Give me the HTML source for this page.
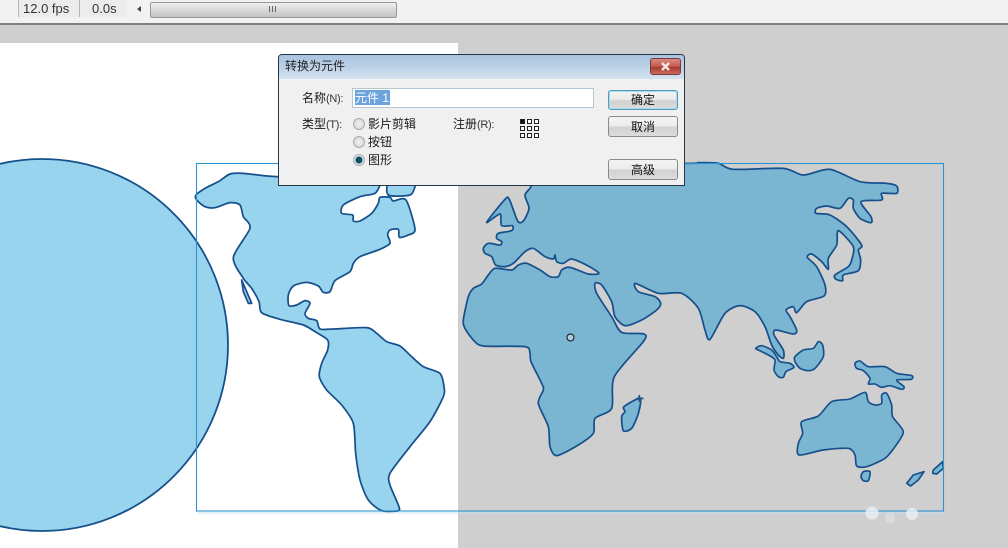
<!DOCTYPE html>
<html lang="zh">
<head>
<meta charset="utf-8">
<title>转换为元件</title>
<style>
html,body{margin:0;padding:0;width:1008px;height:548px;overflow:hidden;background:#cfcfcf;font-family:"Liberation Sans","Noto Sans CJK SC",sans-serif;color:#111}
.abs{position:absolute}
.t{position:absolute;font-size:12px;line-height:14px;white-space:nowrap;color:#1a1a1a}
.t i{font-style:normal;font-size:11px;letter-spacing:-.3px;color:#333}
.btn{position:absolute;left:608px;width:68px;border:1px solid #8a8a8a;border-radius:3px;background:linear-gradient(#f4f4f4 0%,#ececec 45%,#d2d2d2 55%,#dcdcdc 100%);text-align:center;font-size:12px;color:#111;box-sizing:content-box}
.radio{position:absolute;left:353px;width:10px;height:10px;border:1px solid #aaa;border-radius:50%;background:radial-gradient(circle at 50% 50%,#f0f0f0,#d4d4d4)}
.g{position:absolute;width:5px;height:5px;border:1px solid #222;box-sizing:border-box;background:#fff}
</style>
</head>
<body>
<!-- toolbar -->
<div class="abs" style="left:0;top:0;width:1008px;height:23px;background:#f2f2f2"></div>
<div class="abs" style="left:0;top:23px;width:1008px;height:2px;background:#808080"></div>
<div class="abs" style="left:19px;top:0;width:108px;height:17px;background:#ececec"></div>
<div class="abs" style="left:18px;top:0;width:1px;height:17px;background:#b5b5b5"></div>
<div class="abs" style="left:79px;top:0;width:1px;height:17px;background:#b5b5b5"></div>
<div class="t" style="left:23px;top:2px;font-size:13px;color:#333">12.0 fps</div>
<div class="t" style="left:92px;top:2px;font-size:13px;color:#333">0.0s</div>
<div class="abs" style="left:137px;top:6px;width:0;height:0;border:3px solid transparent;border-right:4px solid #444;border-left:0"></div>
<div class="abs" style="left:150px;top:2px;width:245px;height:14px;border:1px solid #999;border-radius:2px;background:linear-gradient(#f0f0f0,#d8d8d8 50%,#c4c4c4)"></div>
<div class="abs" style="left:269px;top:6px;width:7px;height:6px;background:repeating-linear-gradient(90deg,#666 0 1px,transparent 1px 3px)"></div>

<!-- stage -->
<div class="abs" style="left:0;top:43px;width:458px;height:505px;background:#fff"></div>

<svg class="abs" style="left:0;top:0" width="1008" height="548" viewBox="0 0 1008 548">
  <!-- circle -->
  <circle cx="42" cy="345" r="186" fill="#98d4ed" stroke="#16508c" stroke-width="1.8"/>
  <!-- Americas -->
  <g transform="translate(190,160) scale(0.33333)" fill="#98d4ed" stroke="#16508c" stroke-width="5.2" stroke-linejoin="round">
    <path class="s" d="M18,105 L45,85 85,65 120,42 160,40 265,50 400,40 570,60 570,75 555,100 510,110 460,135 455,160 488,165 490,183 510,183 545,160 565,130 570,112 600,112 610,123 648,120 675,208 655,225 628,232 625,208 600,210 593,225 600,250 570,268 510,290 490,310 480,335 435,362 420,395 400,397 385,378 350,367 310,378 295,405 297,437 320,435 345,422 360,430 345,460 355,475 380,482 390,507 430,507 530,503 560,520 590,545 630,558 665,590 700,620 750,640 762,680 760,710 720,785 660,860 600,940 600,975 625,1035 625,1052 575,1052 535,1020 510,960 497,880 490,790 455,735 410,690 388,650 395,610 413,570 413,540 380,518 340,495 270,478 215,458 207,425 185,385 160,355 130,292 180,205 160,170 150,135 120,128 75,143 45,140 20,120Z"/>
    <path class="s" d="M600,60 L595,105 660,105 675,80 680,60Z"/>
    <path d="M155,360 L185,430 175,430 160,395Z"/>
  </g>
  <!-- Eurasia / Africa -->
  <g transform="translate(455,160) scale(0.33333)" fill="#7ab6d2" stroke="#16508c" stroke-width="5.2" stroke-linejoin="round">
    <path class="s" d="M230,75 L210,105 222,145 205,183 188,183 163,118 150,118 95,187 135,162 140,197 172,197 170,212 130,220 125,235 140,245 135,255 100,250 85,265 90,280 110,290 122,315 150,320 175,310 210,275 235,265 270,290 295,297 300,285 305,305 325,310 350,297 400,318 432,340 400,342 345,322 320,330 310,350 285,350 255,330 215,310 190,315 170,330 120,325 100,345 80,372 55,385 40,410 25,480 30,505 55,540 85,558 210,560 225,580 228,605 260,670 265,690 250,730 280,800 285,860 305,887 370,855 415,820 420,775 470,745 478,650 565,545 567,522 500,517 470,470 425,400 420,370 440,375 470,425 480,470 510,497 560,480 605,450 617,430 600,410 550,395 541,370 610,400 680,400 730,445 750,510 765,538 810,460 855,437 900,455 930,500 950,555 970,585 985,595 985,570 957,525 963,510 1015,522 1025,510 1005,470 993,450 1015,440 1025,458 1055,425 1107,408 1110,375 1085,320 1057,292 1070,282 1100,305 1120,328 1120,295 1145,255 1150,212 1195,260 1190,300 1180,320 1140,345 1143,358 1163,362 1165,345 1210,332 1217,300 1210,270 1220,255 1175,200 1125,165 1083,160 1085,145 1115,138 1155,145 1180,115 1195,120 1195,145 1215,175 1248,188 1248,170 1218,125 1280,120 1280,100 1325,100 1325,78 1295,70 1215,65 1125,28 1045,45 985,25 835,28 790,10 730,8 690,10 230,10Z"/>
    <path class="s" d="M507,740 L555,715 550,760 530,805 505,812 500,770 510,755Z"/>
    <path d="M553,705 L553,725 M545,715 L565,715" fill="none"/>
  </g>
  <!-- islands -->
  <g transform="translate(700,160) scale(0.33333)" fill="#7ab6d2" stroke="#16508c" stroke-width="5" stroke-linejoin="round">
    <path class="s" d="M167,565 L185,557 215,570 230,590 240,605 270,610 282,622 258,635 250,652 235,650 222,630 225,600 205,585 175,570Z"/>
    <path class="s" d="M285,590 L310,570 340,565 355,545 368,555 370,590 345,625 325,632 300,625 285,605Z"/>
    <path class="s" d="M465,610 L480,603 505,620 555,620 590,640 635,647 633,658 590,660 612,680 605,688 570,677 545,682 525,672 505,672 510,655 490,632 470,625Z"/>
    <path class="s" d="M305,785 L355,768 395,725 450,717 495,697 505,725 525,735 545,730 545,705 560,700 575,735 578,770 610,815 585,860 555,895 500,920 470,918 465,885 445,865 370,870 297,885 295,850 308,820Z"/>
    <path class="s" d="M490,935 L510,935 505,962 490,962 483,950Z"/>
    <path d="M620,970 L640,945 672,935 655,960 632,978Z"/>
    <path d="M700,930 L728,905 730,925 710,942 698,940Z"/>
  </g>
  <!-- bbox -->
  <rect x="196.5" y="163.5" width="747" height="347.5" fill="none" stroke="#2f93cf" stroke-width="1.1"/>
  <!-- registration point -->
  <circle cx="570.5" cy="337.5" r="3.5" fill="#a9cfdc" stroke="#111" stroke-width="1"/>
  <!-- watermark traces -->
  <rect x="197" y="512" width="746" height="2" fill="#c6e0ee" opacity=".45"/>
  <circle cx="872" cy="513" r="6.5" fill="#e6eef2" opacity=".85"/>
  <circle cx="912" cy="514" r="6" fill="#e6eef2" opacity=".85"/>
  <circle cx="890" cy="518" r="5" fill="#e0e6e8" opacity=".6"/>
</svg>
<script>
document.querySelectorAll('path.s').forEach(function(p){
  var n=p.getAttribute('d').match(/-?\d+(\.\d+)?/g).map(Number),a=[];
  for(var i=0;i<n.length;i+=2)a.push([n[i],n[i+1]]);
  var L=a.length,d='M'+a[0][0]+','+a[0][1],k=0.13;
  for(var i=0;i<L;i++){
    var p0=a[(i-1+L)%L],p1=a[i],p2=a[(i+1)%L],p3=a[(i+2)%L];
    d+=' C'+(p1[0]+(p2[0]-p0[0])*k)+','+(p1[1]+(p2[1]-p0[1])*k)+' '+(p2[0]-(p3[0]-p1[0])*k)+','+(p2[1]-(p3[1]-p1[1])*k)+' '+p2[0]+','+p2[1];
  }
  p.setAttribute('d',d+'Z');
});
</script>

<!-- dialog -->
<div class="abs" style="left:278px;top:54px;width:405px;height:130px;border:1px solid #25364a;border-radius:4px 4px 0 0;background:#f0f0f0;overflow:hidden">
  <div class="abs" style="left:0;top:0;width:405px;height:24px;background:linear-gradient(#a9c3df 0%,#b9cfe6 45%,#d6e3ef 100%)"></div>
  <div class="abs" style="left:0;top:24px;width:405px;height:106px;background:#f0f0f0"></div>
</div>
<div class="abs" style="left:650px;top:58px;width:31px;height:17px;border:1px solid #7a3a3a;border-radius:3px;background:linear-gradient(#d88a80,#c25a50 50%,#a83a30 55%,#c86a5e);box-sizing:border-box"></div>
<svg class="abs" style="left:650px;top:58px" width="31" height="17"><path d="M12,5 L19,12 M19,5 L12,12" stroke="#f4e8e6" stroke-width="2.4" fill="none"/></svg>
<div class="t" style="left:285px;top:59px;color:#222">转换为元件</div>

<div class="t" style="left:302px;top:91px">名称<i>(N):</i></div>
<div class="abs" style="left:352px;top:88px;width:240px;height:18px;background:#fff;border:1px solid #b4c8d4"></div>
<div class="abs" style="left:355px;top:90px;width:35px;height:15px;background:#6ca3dc"></div>
<div class="t" style="left:355px;top:91px;color:#fff">元件 1</div>

<div class="t" style="left:302px;top:117px">类型<i>(T):</i></div>
<div class="radio" style="top:118px"></div>
<div class="t" style="left:368px;top:117px">影片剪辑</div>
<div class="radio" style="top:136px"></div>
<div class="t" style="left:368px;top:135px">按钮</div>
<div class="radio" style="top:154px;background:radial-gradient(circle at 50% 50%,#0f4f6a 0 3px,#dfe8ee 4px)"></div>
<div class="t" style="left:368px;top:153px">图形</div>
<div class="t" style="left:453px;top:117px">注册<i>(R):</i></div>

<div class="g" style="left:520px;top:119px;background:#111"></div>
<div class="g" style="left:527px;top:119px"></div>
<div class="g" style="left:534px;top:119px"></div>
<div class="g" style="left:520px;top:126px"></div>
<div class="g" style="left:527px;top:126px"></div>
<div class="g" style="left:534px;top:126px"></div>
<div class="g" style="left:520px;top:133px"></div>
<div class="g" style="left:527px;top:133px"></div>
<div class="g" style="left:534px;top:133px"></div>

<div class="btn" style="top:90px;height:18px;line-height:19px;border:1px solid #4f9cb8;box-shadow:inset 0 0 0 1px #a8dcec">确定</div>
<div class="btn" style="top:116px;height:19px;line-height:20px">取消</div>
<div class="btn" style="top:159px;height:19px;line-height:20px">高级</div>
</body>
</html>
